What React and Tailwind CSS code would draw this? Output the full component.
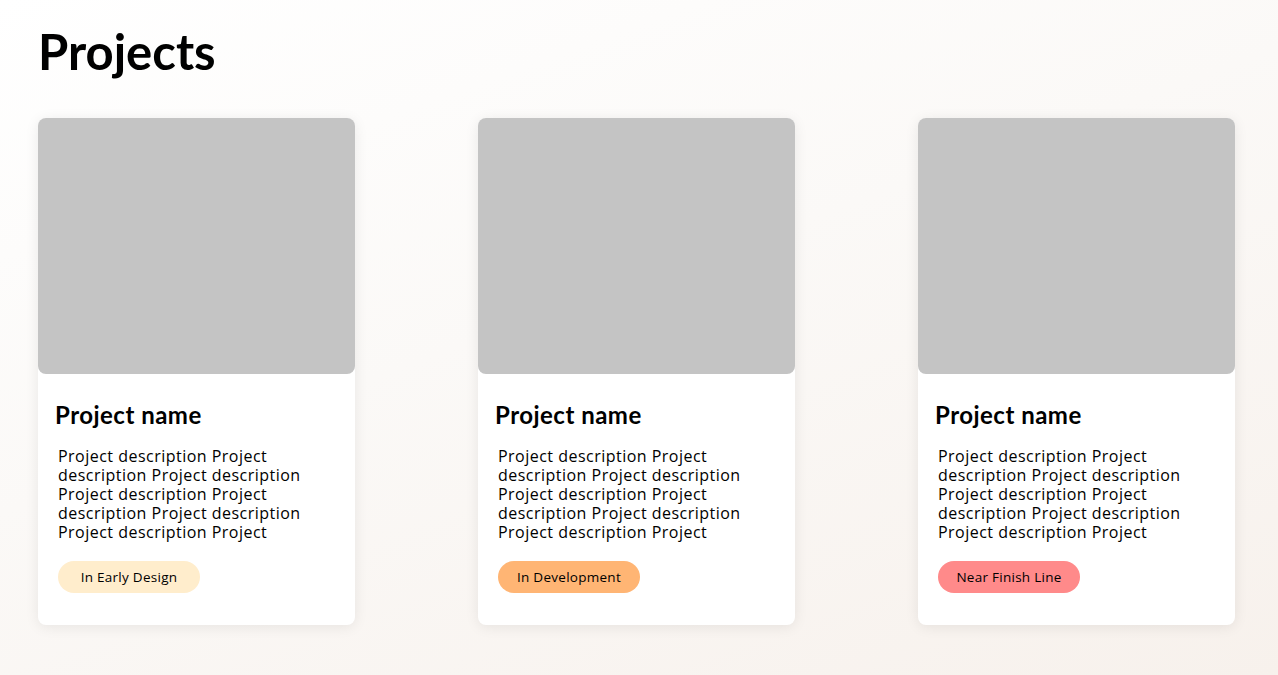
const projects = [
  { status: 'In Early Design', badge: 'bg-[#ffedcc]' },
  { status: 'In Development', badge: 'bg-[#ffb574]' },
  { status: 'Near Finish Line', badge: 'bg-[#ff8a8a]' },
];

const desc =
  'Project description Project description Project description Project description Project description Project description Project description Project';

const ProjectCard = ({ status, badge }) => (
  <div className="w-[317px] h-[507px] bg-white rounded-lg shadow-[0_2px_14px_rgba(0,0,0,0.08)] flex flex-col">
    <div className="h-[256px] bg-[#c4c4c4] rounded-lg"></div>
    <h2 className="mt-[26px] ml-[17px] text-[24px] leading-[30px] font-bold text-black tracking-[0.02em]">Project name</h2>
    <p
      className="mt-[17px] ml-[20px] w-[270px] text-[16px] leading-[19px] tracking-[0.03em] text-black"
      style={{ fontFamily: '"Open Sans", "Noto Sans", sans-serif' }}
    >
      {desc}
    </p>
    <div className="mt-[19px] ml-[20px]">
      <span
        className={`inline-flex items-center justify-center w-[142px] h-[32px] rounded-full text-[13.5px] tracking-[0.02em] text-black ${badge}`}
        style={{ fontFamily: '"Open Sans", "Noto Sans", sans-serif' }}
      >
        {status}
      </span>
    </div>
  </div>
);

const App = () => {
  return (
    <div
      className="min-h-screen w-full bg-[linear-gradient(160deg,#ffffff_0%,#fbf9f7_45%,#f7f1ec_100%)] px-[38px] pt-[22px]"
      style={{ fontFamily: '"Lato", "Noto Sans", sans-serif' }}
    >
      <h1 className="text-[49px] leading-[58px] font-bold text-black">Projects</h1>
      <div className="mt-[38px] flex justify-between w-[1197px]">
        {projects.map((p) => (
          <ProjectCard key={p.status} {...p} />
        ))}
      </div>
    </div>
  );
};

export default App;
